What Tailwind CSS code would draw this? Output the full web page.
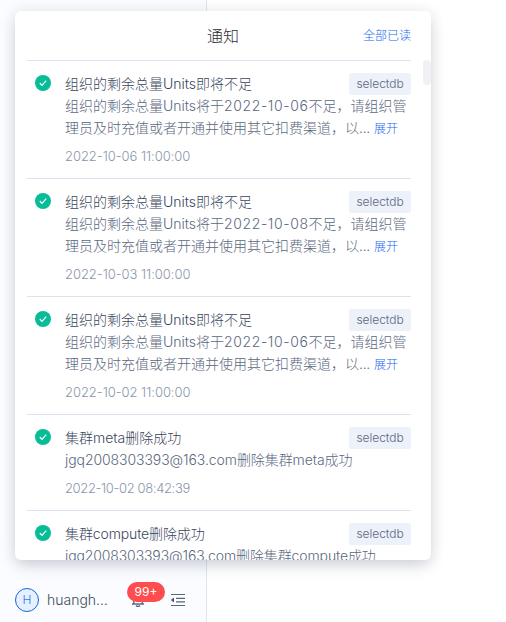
<!DOCTYPE html>
<html lang="zh">
<head>
<meta charset="utf-8">
<script src="https://cdn.jsdelivr.net/npm/@tailwindcss/browser@4"></script>
</head>
<body class="relative h-[622px] w-[506px] overflow-hidden bg-white font-light font-['Inter','Noto_Sans_CJK_SC',sans-serif]">
<aside class="flex h-[622px] w-[207px] flex-col justify-end border-r border-[#dfe5f0] bg-[#fafcff]">
  <div class="flex h-11 items-center pl-[15px]">
    <div class="flex size-6 shrink-0 items-center justify-center rounded-full border border-[#1463e0] bg-[#e6f0ff] text-xs text-[#2f7bf0]">H</div>
    <div class="ml-2 w-[61px] whitespace-nowrap text-sm text-[#3f4a5a]">huangh…</div>
    <div class="relative ml-[22px] size-4">
      <svg class="size-4" viewBox="0 0 16 16" fill="none" stroke="#5b6b85" stroke-width="1.4"><path d="M2 12h12M3.8 11.8V7a4.2 4.2 0 0 1 8.4 0v4.8M6 13.6q2 1.6 4 0"/></svg>
      <span class="absolute -left-[3px] -top-[10px] flex h-5 w-[38px] items-center justify-center rounded-full bg-[#ff4d4f] text-xs font-normal text-white">99+</span>
    </div>
    <svg class="ml-6 size-4" viewBox="0 0 16 16" fill="none" stroke="#56647c" stroke-width="1.2"><path d="M1 2.5h14M6 6.3h9M6 9.8h9M1 13.5h14"/><path d="M4 5.5v5L.8 8z" fill="#475670" stroke="none"/></svg>
  </div>
</aside>
<section class="absolute left-[15px] top-[11px] flex h-[549px] w-[416px] flex-col overflow-hidden rounded-md bg-white shadow-[0_6px_16px_-2px_rgba(40,50,75,0.22),0_0_16px_rgba(40,50,75,0.07)]">
  <header class="mx-3 mr-5 grid h-[50px] shrink-0 grid-cols-[1fr_auto_1fr] items-center border-b border-[#dbe3f1]">
    <span></span><h1 class="ml-2 text-base text-[#303133]">通知</h1><a class="justify-self-end text-xs text-[#1668f0]">全部已读</a>
  </header>
  <div id="list" class="ml-3 mr-5 text-sm leading-[22px] text-[#5b6880]"></div>
  <div class="absolute right-0 top-[49px] h-[25px] w-2 rounded-full bg-[#f0f1f4]"></div>
</section>
<template id="item">
  <article class="flex border-b border-[#dbe3f1] pb-[11px] pl-2 pt-3">
    <svg class="mt-0.5 size-4 shrink-0" viewBox="0 0 16 16"><circle cx="8" cy="8" r="8" fill="#07bd98"/><path d="M4.8 8l2.2 2.3 4.2-4.7" fill="none" stroke="#fff" stroke-width="1.2"/></svg>
    <div class="ml-[14px] min-w-0 flex-1">
      <div class="flex h-[22px] items-start justify-between"><h2 class="whitespace-nowrap text-[#39465c]"></h2><span class="flex h-[22px] w-[62px] items-center justify-center rounded-[3px] bg-[#ecf1fa] text-xs tracking-[-0.05px]">selectdb</span></div>
      <div class="lines"></div>
      <time class="mt-1.5 block whitespace-nowrap text-[13px] text-[#8a96aa]"></time>
    </div>
  </article>
</template>
<script>
const low = d => ['组织的剩余总量Units即将不足', ['组织的剩余总量Units将于<span class="tracking-[0.6px]">' + d + '</span>不足，请组织管', '理员及时充值或者开通并使用其它扣费渠道，以<span class="tracking-[-0.3px]">...</span> <a class="text-xs text-[#1668f0]">展开</a>']];
const rows = [
  [...low('2022-10-06'), '2022-10-06 11:00:00', 'tracking-[-0.04px]'],
  [...low('2022-10-08'), '2022-10-03 11:00:00', 'tracking-[-0.04px]'],
  [...low('2022-10-06'), '2022-10-02 11:00:00', 'tracking-[-0.04px]'],
  ['集群meta删除成功', ['<span class="tracking-[-0.08px]">jgq2008303393@163.com删除集群meta成功</span>'], '2022-10-02 08:42:39', 'tracking-[-0.36px]'],
  ['集群compute删除成功', ['<span class="tracking-[-0.12px]">jgq2008303393@163.com删除集群compute成功</span>'], '2022-10-02 08:42:39', 'tracking-[-0.36px]', 'tracking-[-0.12px]']
];
for (const [title, lines, time, timeClass, titleClass] of rows) {
  const n = document.getElementById('item').content.cloneNode(true);
  const h = n.querySelector('h2'), tm = n.querySelector('time');
  h.textContent = title;
  if (titleClass) h.classList.add(titleClass);
  tm.textContent = time;
  tm.classList.add(timeClass);
  for (const t of lines) {
    const p = document.createElement('p');
    p.className = 'h-[22px] whitespace-nowrap';
    p.innerHTML = t;
    n.querySelector('.lines').append(p);
  }
  document.getElementById('list').append(n);
}
</script>
</body>
</html>
